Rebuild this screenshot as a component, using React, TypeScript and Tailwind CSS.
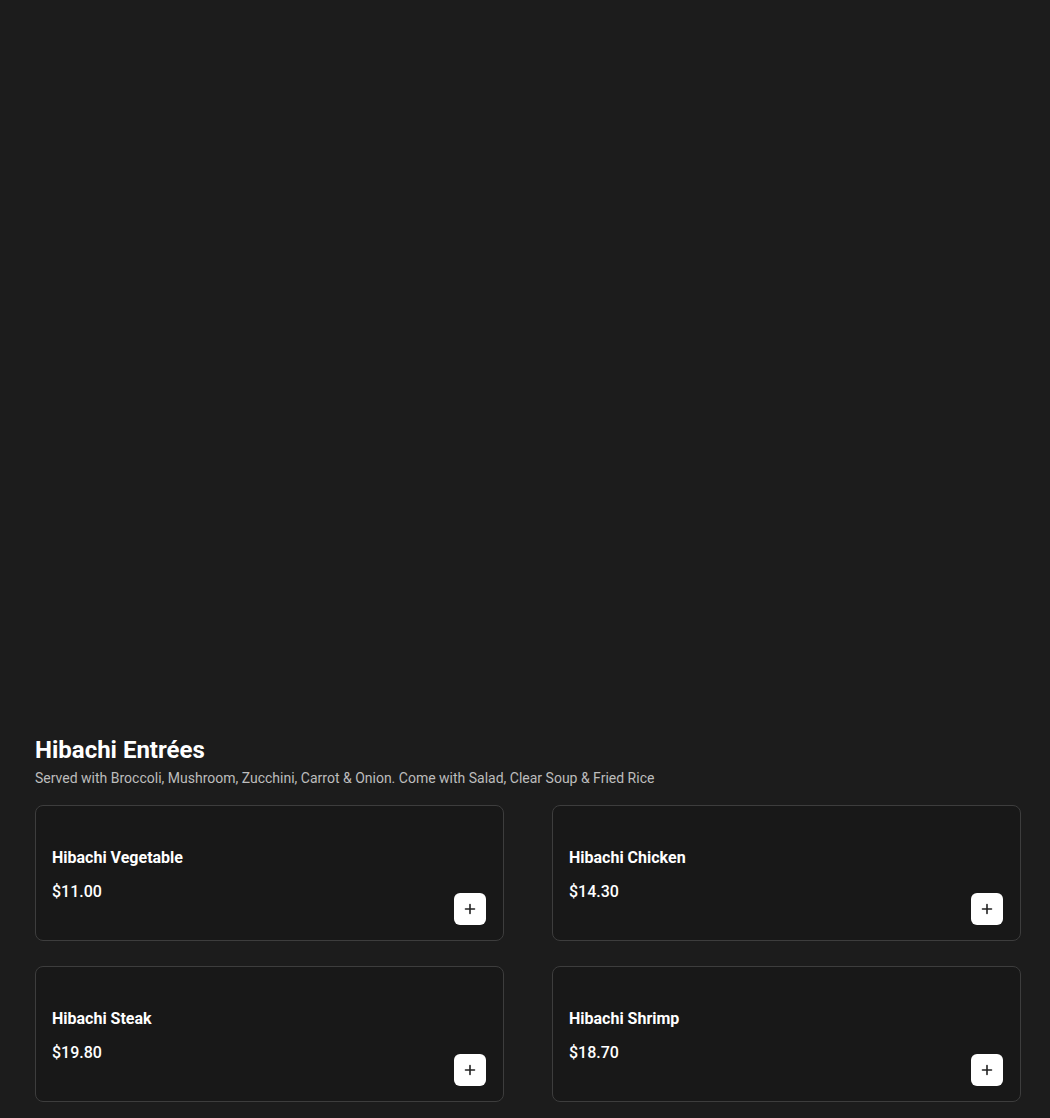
import React from "react";

const items = [
  { name: "Hibachi Vegetable", price: "$11.00" },
  { name: "Hibachi Chicken", price: "$14.30" },
  { name: "Hibachi Steak", price: "$19.80" },
  { name: "Hibachi Shrimp", price: "$18.70" },
];

function PlusIcon() {
  return (
    <svg width="12" height="12" viewBox="0 0 12 12" fill="none">
      <path d="M6 1.5v9M1.5 6h9" stroke="#222" strokeWidth="1.6" strokeLinecap="round" />
    </svg>
  );
}

export default function App() {
  return (
    <div
      className="min-h-[1118px] bg-[#1c1c1c] text-white"
      style={{ fontFamily: "Roboto, 'Noto Sans', sans-serif" }}
    >
      <div className="h-[734px]" />
      <div className="px-[35px]">
        <h2 className="text-[24px] leading-[32px] font-bold text-white">Hibachi Entrées</h2>
        <p className="mt-[2px] text-[14px] leading-[20px] text-[#bdbdbd]">
          Served with Broccoli, Mushroom, Zucchini, Carrot &amp; Onion. Come with Salad, Clear Soup &amp; Fried Rice
        </p>
        <div className="mt-[17px] grid grid-cols-[469px_469px] gap-x-[48px] gap-y-[25px]">
          {items.map((it) => (
            <div
              key={it.name}
              className="flex h-[136px] flex-col rounded-lg border border-[#3d3d3d] bg-[#181818] pl-4 pr-[17px] pt-[40px] pb-[14px]"
            >
              <div className="text-[16px] leading-[24px] font-bold text-white">{it.name}</div>
              <div className="mt-[10px] flex items-start justify-between">
                <div className="text-[16px] leading-[24px] font-medium text-white">{it.price}</div>
                <button className="mt-[13px] flex h-8 w-8 items-center justify-center rounded-md bg-white">
                  <PlusIcon />
                </button>
              </div>
            </div>
          ))}
        </div>
        <div className="h-10" />
      </div>
    </div>
  );
}
